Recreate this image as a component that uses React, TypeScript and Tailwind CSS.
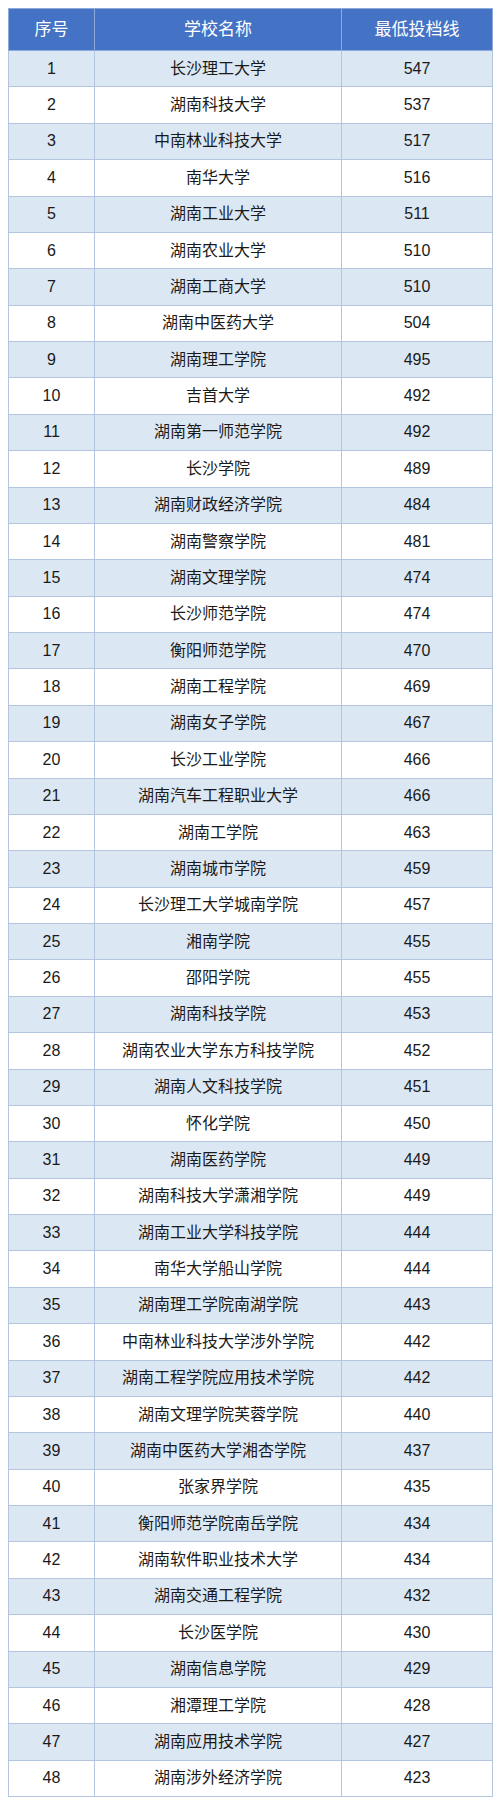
const rows: [string, number][] = [
  ["长沙理工大学", 547],
  ["湖南科技大学", 537],
  ["中南林业科技大学", 517],
  ["南华大学", 516],
  ["湖南工业大学", 511],
  ["湖南农业大学", 510],
  ["湖南工商大学", 510],
  ["湖南中医药大学", 504],
  ["湖南理工学院", 495],
  ["吉首大学", 492],
  ["湖南第一师范学院", 492],
  ["长沙学院", 489],
  ["湖南财政经济学院", 484],
  ["湖南警察学院", 481],
  ["湖南文理学院", 474],
  ["长沙师范学院", 474],
  ["衡阳师范学院", 470],
  ["湖南工程学院", 469],
  ["湖南女子学院", 467],
  ["长沙工业学院", 466],
  ["湖南汽车工程职业大学", 466],
  ["湖南工学院", 463],
  ["湖南城市学院", 459],
  ["长沙理工大学城南学院", 457],
  ["湘南学院", 455],
  ["邵阳学院", 455],
  ["湖南科技学院", 453],
  ["湖南农业大学东方科技学院", 452],
  ["湖南人文科技学院", 451],
  ["怀化学院", 450],
  ["湖南医药学院", 449],
  ["湖南科技大学潇湘学院", 449],
  ["湖南工业大学科技学院", 444],
  ["南华大学船山学院", 444],
  ["湖南理工学院南湖学院", 443],
  ["中南林业科技大学涉外学院", 442],
  ["湖南工程学院应用技术学院", 442],
  ["湖南文理学院芙蓉学院", 440],
  ["湖南中医药大学湘杏学院", 437],
  ["张家界学院", 435],
  ["衡阳师范学院南岳学院", 434],
  ["湖南软件职业技术大学", 434],
  ["湖南交通工程学院", 432],
  ["长沙医学院", 430],
  ["湖南信息学院", 429],
  ["湘潭理工学院", 428],
  ["湖南应用技术学院", 427],
  ["湖南涉外经济学院", 423],
];

export default function App() {
  return (
    <div
      className="w-[500px] h-[1804px] bg-white pt-[8px] px-[8px]"
      style={{ fontFamily: '"Liberation Sans", "Noto Sans CJK SC", sans-serif' }}
    >
      <table className="w-[484px] border-collapse border border-[#a9b9cf] table-fixed">
        <colgroup>
          <col className="w-[86px]" />
          <col className="w-[247px]" />
          <col className="w-[151px]" />
        </colgroup>
        <thead>
          <tr className="h-[42px] bg-[#4472c4] text-white text-[17px]">
            <th className="font-normal border border-[#8eaadb]">序号</th>
            <th className="font-normal border border-[#8eaadb]">学校名称</th>
            <th className="font-normal border border-[#8eaadb]">最低投档线</th>
          </tr>
        </thead>
        <tbody>
          {rows.map(([name, score], i) => (
            <tr
              key={i}
              className={`h-[36.375px] text-[16px] text-[#1a1a1a] ${
                i % 2 === 0 ? "bg-[#dce7f4]" : "bg-white"
              }`}
            >
              <td className="text-center border border-[#b4c6df]">{i + 1}</td>
              <td className="text-center border border-[#b4c6df]">{name}</td>
              <td className="text-center border border-[#b4c6df]">{score}</td>
            </tr>
          ))}
        </tbody>
      </table>
    </div>
  );
}
